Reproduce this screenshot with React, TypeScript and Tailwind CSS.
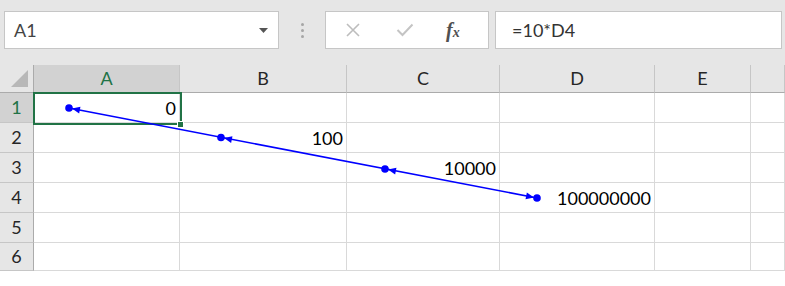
import React from "react";

const font = { fontFamily: "Lato, 'Open Sans', sans-serif" };

const cols = [
  { key: "A", w: "w-[146px]" },
  { key: "B", w: "w-[167px]" },
  { key: "C", w: "w-[153px]" },
  { key: "D", w: "w-[155px]" },
  { key: "E", w: "w-[96px]" },
  { key: "F", w: "flex-1" },
];

// values by row -> column
const values: Record<number, Record<string, string>> = {
  1: { A: "0" },
  2: { B: "100" },
  3: { C: "10000" },
  4: { D: "100000000" },
};

const rows = [
  { n: 1, h: "h-[30px]" },
  { n: 2, h: "h-[30px]" },
  { n: 3, h: "h-[30px]" },
  { n: 4, h: "h-[30px]" },
  { n: 5, h: "h-[30px]" },
  { n: 6, h: "h-[28px]" },
];

function TraceArrows() {
  const start = { x: 69, y: 108 };
  const end = { x: 537, y: 198 };
  const dx = end.x - start.x;
  const dy = end.y - start.y;
  const len = Math.hypot(dx, dy);
  const ux = dx / len;
  const uy = dy / len;
  const dots = [start, { x: 221, y: 137.5 }, { x: 385, y: 169 }, end];

  // arrowhead: tip near the dot, base further along dir
  const head = (p: { x: number; y: number }, dir: number) => {
    const tx = p.x + dir * 3 * ux;
    const ty = p.y + dir * 3 * uy;
    const bx = p.x + dir * 11 * ux;
    const by = p.y + dir * 11 * uy;
    const nx = -uy * 3.5;
    const ny = ux * 3.5;
    return `${tx},${ty} ${bx + nx},${by + ny} ${bx - nx},${by - ny}`;
  };

  return (
    <svg className="absolute left-0 top-0 pointer-events-none" width="785" height="286">
      <line x1={start.x} y1={start.y} x2={end.x} y2={end.y} stroke="#0000ff" strokeWidth="1.6" />
      {dots.map((d, i) => (
        <circle key={i} cx={d.x} cy={d.y} r="3.8" fill="#0000ff" />
      ))}
      <polygon points={head(dots[0], 1)} fill="#0000ff" />
      <polygon points={head(dots[1], 1)} fill="#0000ff" />
      <polygon points={head(dots[2], 1)} fill="#0000ff" />
      <polygon points={head(dots[3], -1)} fill="#0000ff" />
    </svg>
  );
}

export default function App() {
  return (
    <div className="relative w-[785px] h-[286px] overflow-hidden bg-white text-[18px]" style={font}>
      {/* Formula bar */}
      <div className="flex items-start h-[65px] bg-[#e6e6e6] pt-[11px]">
        <div className="ml-[4px] w-[275px] h-[38px] bg-white border border-[#c6c6c6] flex items-center pl-[9px] pr-[10px]">
          <span className="flex-1 text-[#444]">A1</span>
          <svg width="9" height="5" viewBox="0 0 9 5">
            <polygon points="0,0 9,0 4.5,5" fill="#555" />
          </svg>
        </div>
        <div className="w-[46px] h-[38px] flex flex-col items-center justify-center gap-[3px]">
          <span className="w-[3px] h-[3px] rounded-full bg-[#a6a6a6]" />
          <span className="w-[3px] h-[3px] rounded-full bg-[#a6a6a6]" />
          <span className="w-[3px] h-[3px] rounded-full bg-[#a6a6a6]" />
        </div>
        <div className="w-[164px] h-[38px] bg-white border border-[#c6c6c6] flex items-center">
          <svg className="ml-[19px]" width="16" height="16" viewBox="0 0 16 16">
            <path d="M2 2 L14 14 M14 2 L2 14" stroke="#bdbdbd" strokeWidth="1.6" fill="none" />
          </svg>
          <svg className="ml-[35px]" width="18" height="14" viewBox="0 0 18 14">
            <path d="M1.5 7 L6.5 12 L16.5 1.5" stroke="#c4c4c4" strokeWidth="2" fill="none" />
          </svg>
          <span
            className="ml-[32px] italic font-bold text-[#505050] text-[20px] leading-none"
            style={{ fontFamily: "'Liberation Serif', serif" }}
          >
            f<span className="text-[14px]">x</span>
          </span>
        </div>
        <div className="ml-[6px] w-[287px] h-[38px] bg-white border border-[#c6c6c6] flex items-center pl-[16px] text-[#333]">
          =10*D4
        </div>
      </div>

      {/* Column headers */}
      <div className="flex h-[28px] bg-[#e6e6e6]">
        <div className="w-[34px] h-full border-r border-[#ababab] border-b border-b-[#ababab] flex items-end justify-end pr-[5px] pb-[5px]">
          <svg width="17" height="17" viewBox="0 0 17 17">
            <polygon points="17,0 17,17 0,17" fill="#b8b8b8" />
          </svg>
        </div>
        {cols.map((c) => (
          <div
            key={c.key}
            className={`${c.w} h-full flex items-center justify-center border-r border-[#c6c6c6] border-b border-b-[#ababab] ${
              c.key === "A" ? "bg-[#d2d2d2] text-[#217346]" : "text-[#262626]"
            }`}
          >
            {c.key === "F" ? "" : c.key}
          </div>
        ))}
      </div>

      {/* Grid rows */}
      {rows.map((r) => (
        <div key={r.n} className={`flex ${r.h}`}>
          <div
            className={`w-[34px] h-full flex items-center justify-center border-r border-[#ababab] border-b border-b-[#c6c6c6] ${
              r.n === 1 ? "bg-[#d2d2d2] text-[#217346]" : "bg-[#e6e6e6] text-[#262626]"
            }`}
          >
            {r.n}
          </div>
          {cols.map((c) => (
            <div
              key={c.key}
              className={`${c.w} h-full flex items-end justify-end pr-[3px] border-r border-b border-[#d9d9d9] text-black whitespace-nowrap`}
            >
              {values[r.n]?.[c.key] ?? ""}
            </div>
          ))}
        </div>
      ))}

      {/* Selection on A1 */}
      <div className="absolute left-[33px] top-[92px] w-[149px] h-[33px] border-2 border-[#217346] pointer-events-none" />
      <div className="absolute left-[177px] top-[121px] w-[7px] h-[7px] bg-[#217346] border border-white pointer-events-none" />

      <TraceArrows />
    </div>
  );
}
